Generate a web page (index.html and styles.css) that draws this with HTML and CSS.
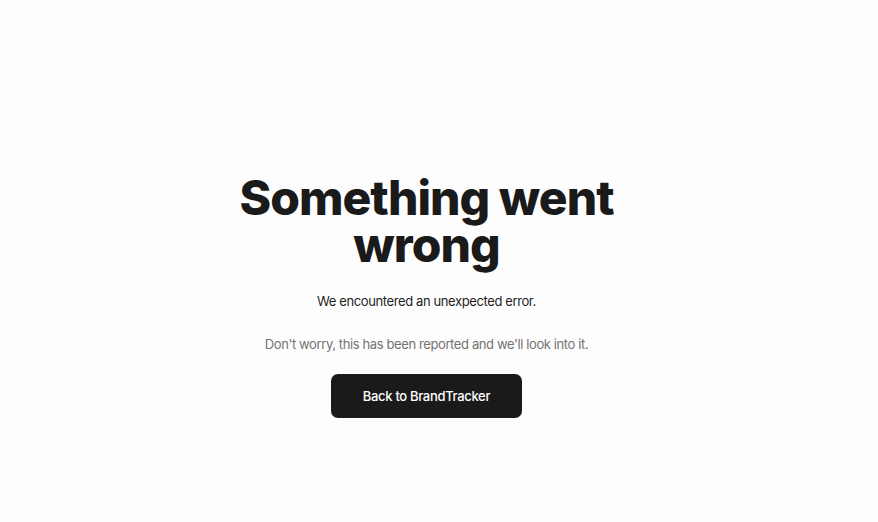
FILE: index.html
```html
<!DOCTYPE html>
<html lang="en">
<head>
<meta charset="utf-8">
<title>Something went wrong</title>
<link rel="stylesheet" href="styles.css">
</head>
<body>
<main class="page">
  <section class="error">
    <h1 class="error-title">Something went<br>wrong</h1>
    <p class="error-lead">We encountered an unexpected error.</p>
    <p class="error-note">Don't worry, this has been reported and we'll look into it.</p>
    <a class="error-button" href="#">Back to BrandTracker</a>
  </section>
</main>
</body>
</html>
```
FILE: styles.css
```css
html, body {
  margin: 0;
  padding: 0;
  background: #fdfdfd;
  font-family: Inter, "Liberation Sans", sans-serif;
  color: #1a1a1a;
}
.page {
  width: 853px;
  height: 522px;
  display: flex;
  justify-content: center;
}
.error {
  padding-top: 174px;
  display: flex;
  flex-direction: column;
  align-items: center;
  text-align: center;
}
.error-title {
  margin: 0;
  font-size: 48px;
  line-height: 47px;
  font-weight: 800;
  letter-spacing: -0.02em;
  color: #1a1a1a;
}
.error-lead {
  margin: 23px 0 0;
  font-size: 13px;
  line-height: 20px;
  color: #1f1f1f;
  letter-spacing: -0.03em;
}
.error-note {
  margin: 23px 0 0;
  font-size: 13px;
  line-height: 20px;
  color: #737373;
  letter-spacing: -0.03em;
}
.error-button {
  margin-top: 20px;
  width: 191px;
  height: 44px;
  box-sizing: border-box;
  display: flex;
  align-items: center;
  justify-content: center;
  background: #1a1a1b;
  color: #fff;
  border-radius: 7px;
  font-size: 13px;
  font-weight: 500;
  letter-spacing: -0.025em;
  text-decoration: none;
}
```
